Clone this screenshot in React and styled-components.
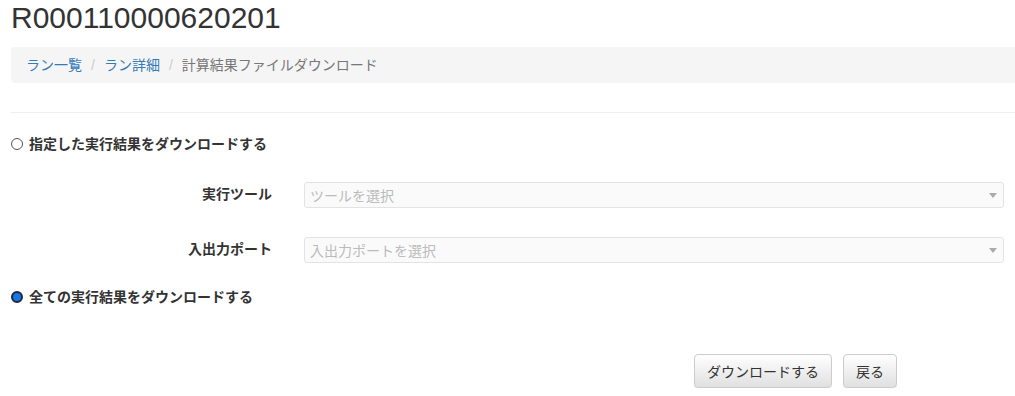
import React from 'react'
import styled, { createGlobalStyle } from 'styled-components';

const GlobalStyle = createGlobalStyle`
  body {
    margin: 0;
    background: #fff;
    color: #333;
    font-family: "Liberation Sans", "Noto Sans CJK JP", sans-serif;
    font-size: 14px;
  }
`

const Page = styled.div`
  padding: 1px 0 0 11px;
`

const Title = styled.h2`
  margin: 0;
  font-size: 30px;
  line-height: 33px;
  font-weight: 500;
  color: #333;
`

const Breadcrumb = styled.ol`
  display: flex;
  list-style: none;
  margin: 13px 0 0;
  padding: 8px 15px;
  line-height: 20px;
  background: #f5f5f5;
  border-radius: 4px 0 0 4px;

  li + li::before {
    content: "/";
    padding: 0 9px;
    color: #ccc;
  }
`

const Crumb = styled.li`
  color: ${p => (p.$active ? '#777' : '#337ab7')};
`

const Rule = styled.hr`
  margin: 29px 0 0;
  border: 0;
  border-top: 1px solid #eee;
`

const RadioRow = styled.label`
  display: flex;
  align-items: center;
  gap: 6px;
  margin-top: ${p => p.$top}px;
  line-height: 20px;
  font-weight: bold;
`

const RadioMark = styled.span`
  box-sizing: border-box;
  width: 12px;
  height: 12px;
  border-radius: 50%;
  border: ${p => (p.$checked ? '2px solid #1b2a3a' : '1px solid #555')};
  background: ${p => (p.$checked ? '#1877e8' : '#fff')};
`

const FormGroup = styled.div`
  display: flex;
  align-items: center;
  gap: 32px;
  margin-top: ${p => p.$top}px;
  margin-right: 11px;
`

const Label = styled.span`
  width: 261px;
  padding-bottom: 5px;
  text-align: right;
  font-weight: bold;
`

const Select = styled.div`
  flex: 1;
  display: flex;
  align-items: center;
  justify-content: space-between;
  box-sizing: border-box;
  height: 26px;
  padding: 0 6px 0 5px;
  background: #fafafa;
  border: 1px solid #e3e3e3;
  border-radius: 3px;
  color: #bbb;
`

const Caret = styled.span`
  width: 0;
  height: 0;
  border-left: 4px solid transparent;
  border-right: 4px solid transparent;
  border-top: 5px solid #aaa;
`

const Actions = styled.div`
  display: flex;
  justify-content: flex-end;
  gap: 11px;
  margin-top: 47px;
  padding-right: 118px;
`

const Button = styled.button`
  height: 34px;
  padding: 6px 12px;
  font: inherit;
  font-size: 14px;
  color: #333;
  border: 1px solid #ccc;
  border-radius: 4px;
  background: linear-gradient(to bottom, #fff 0%, #e0e0e0 100%);
  box-shadow: inset 0 1px 0 rgba(255,255,255,.15), 0 1px 1px rgba(0,0,0,.075);
`

const App = () => {
    return (
        <Page>
            <GlobalStyle />
            <Title>R000110000620201</Title>
            <Breadcrumb>
                <Crumb>ラン一覧</Crumb>
                <Crumb>ラン詳細</Crumb>
                <Crumb $active>計算結果ファイルダウンロード</Crumb>
            </Breadcrumb>
            <Rule />
            <RadioRow $top={21}>
                <RadioMark />
                指定した実行結果をダウンロードする
            </RadioRow>
            <FormGroup $top={28}>
                <Label>実行ツール</Label>
                <Select>ツールを選択<Caret /></Select>
            </FormGroup>
            <FormGroup $top={29}>
                <Label>入出力ポート</Label>
                <Select>入出力ポートを選択<Caret /></Select>
            </FormGroup>
            <RadioRow $top={24}>
                <RadioMark $checked />
                全ての実行結果をダウンロードする
            </RadioRow>
            <Actions>
                <Button>ダウンロードする</Button>
                <Button>戻る</Button>
            </Actions>
        </Page>
    )
}

export default App
